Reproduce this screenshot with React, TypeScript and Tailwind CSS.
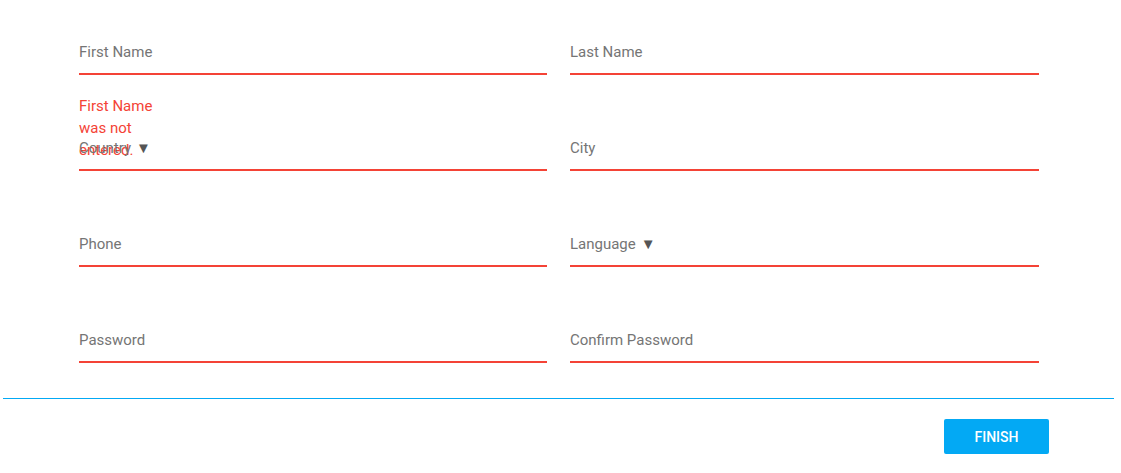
import React from "react";

type Field = { label: string; select?: boolean; error?: string };

const fields: Field[] = [
  { label: "First Name", error: "First Name was not entered." },
  { label: "Last Name" },
  { label: "Country", select: true },
  { label: "City" },
  { label: "Phone" },
  { label: "Language", select: true },
  { label: "Password" },
  { label: "Confirm Password" },
];

const FormField = ({ field }: { field: Field }) => (
  <div className="relative border-b-2 border-[#f44336] pb-[11px]">
    <div className="h-5 text-[15px] leading-5 text-[#757575]">
      {field.label}
      {field.select && <span className="ml-[5px] text-[#555]">▼</span>}
    </div>
    {field.error && (
      <div className="absolute left-0 top-full mt-[22px] w-[80px] text-[15px] leading-[22px] text-[#f44336]">
        {field.error}
      </div>
    )}
  </div>
);

const App = () => {
  return (
    <div className="h-[473px] w-[1121px] bg-white font-['Roboto',_'Liberation_Sans',_sans-serif]">
      <div className="grid w-[1040px] grid-cols-[468px_469px] gap-x-[23px] gap-y-[63px] pl-[79px] pt-[42px]">
        {fields.map((f) => (
          <FormField key={f.label} field={f} />
        ))}
      </div>
      <div className="ml-[3px] mt-[35px] h-px w-[1111px] bg-[#03a9f4]" />
      <div className="flex justify-end pr-[72px] pt-[20px]">
        <button className="h-[35px] w-[105px] rounded-[2px] bg-[#03a9f4] text-sm font-medium text-white">
          FINISH
        </button>
      </div>
    </div>
  );
};

export default App;
